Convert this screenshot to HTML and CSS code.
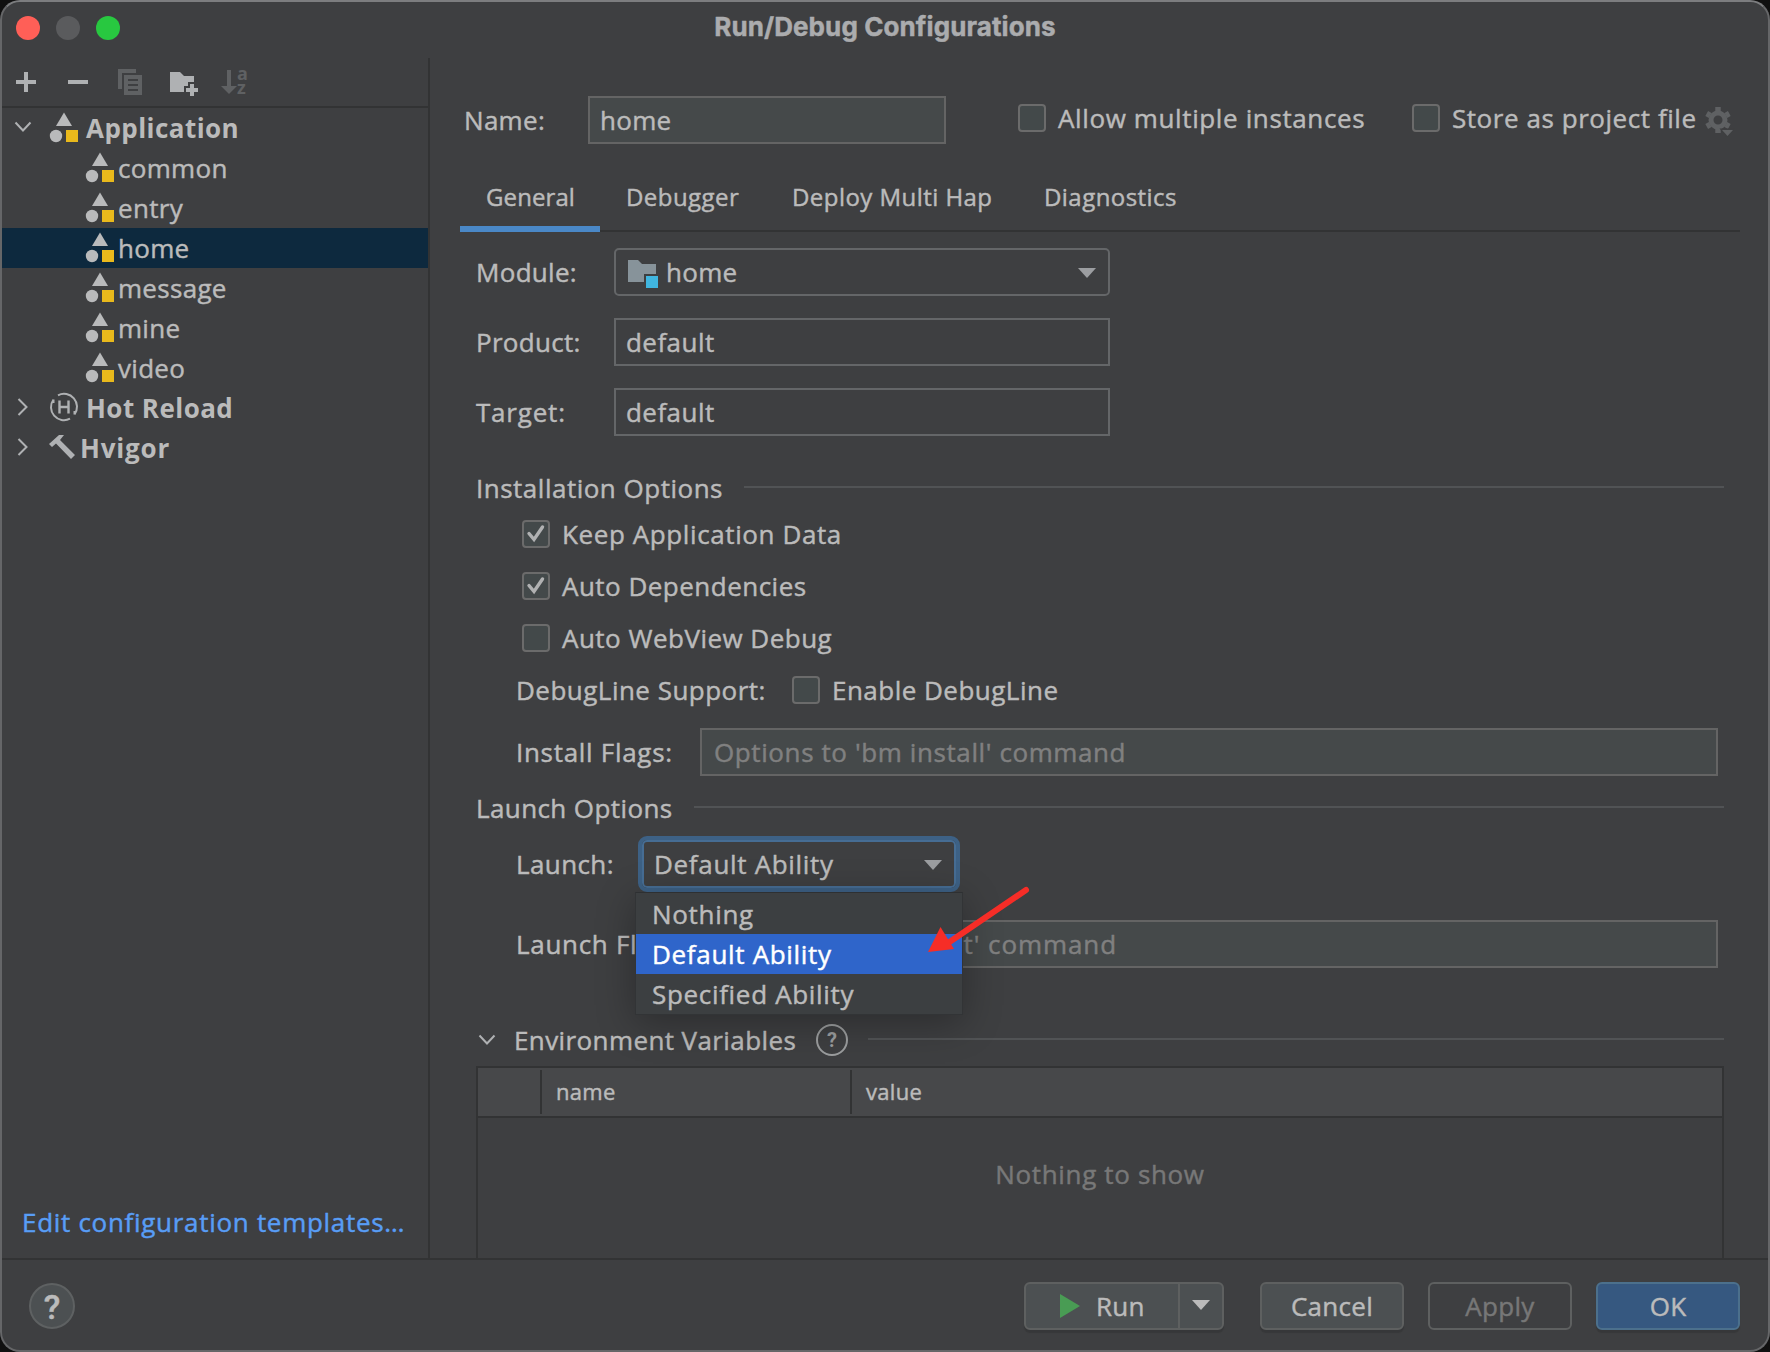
FILE: index.html
```html
<!DOCTYPE html>
<html lang="en">
<head>
    <meta charset="UTF-8">
    <meta name="viewport" content="width=device-width, initial-scale=1.0">
    <title>Run/Debug Configurations</title>
    <link rel="stylesheet" href="styles.css">
</head>
<body>
    <svg class="defs">
        <symbol id="app" viewBox="0 0 30 32">
            <path d="M15 1.500L23 15H7z" fill="#b9babb"/>
            <circle cx="7" cy="25" r="6.200" fill="#b9babb"/>
            <rect x="17" y="19" width="12" height="12" fill="#e9b91c"/>
        </symbol>
        <symbol id="down" viewBox="0 0 18 10">
            <path d="M0 0h18l-9 10z" fill="currentColor"/>
        </symbol>
        <symbol id="chevron" viewBox="0 0 18 12">
            <path d="M1.500 1.500L9 9.500l7.500-8" fill="none" stroke="#afb1b3" stroke-width="2"/>
        </symbol>
        <symbol id="chevron-right" viewBox="0 0 12 18">
            <path d="M1.500 1l8 8-8 8" fill="none" stroke="#afb1b3" stroke-width="2"/>
        </symbol>
    </svg>

    <div class="window">
        <div class="titlebar">
            <div class="lights">
                <span class="light red"></span>
                <span class="light gray"></span>
                <span class="light green"></span>
            </div>
            <div class="title">Run/Debug Configurations</div>
        </div>

        <div class="content">
            <div class="sidebar">
                <div class="toolbar">
                    <svg width="20" height="20"><path d="M8 0h4v8h8v4h-8v8H8v-8H0V8h8z" fill="#afb1b3"/></svg>
                    <svg width="20" height="20"><path d="M0 8h20v4H0z" fill="#afb1b3"/></svg>
                    <svg width="24" height="26">
                        <path d="M0 0h18v4H4v16H0zM6 6h18v20H6z" fill="#5f6163"/>
                        <path d="M10 11h10M10 16h10M10 21h10" stroke="#3e3f41" stroke-width="2"/>
                    </svg>
                    <svg width="28" height="26">
                        <path d="M0 1h10l4 4h10v6h-6v4h-4v6H0z" fill="#afb1b3"/>
                        <path d="M20 13h4v4h4v4h-4v4h-4v-4h-4v-4h4z" fill="#afb1b3"/>
                    </svg>
                    <svg class="sort" width="32" height="40">
                        <path d="M6 8h4v16h6l-8 8-8-8h6z" fill="#5f6163"/>
                        <text x="16" y="18">a</text>
                        <text x="16" y="32">z</text>
                    </svg>
                </div>
                <div class="tree">
                    <div class="node group"><svg class="arrow" width="18" height="12"><use href="#chevron"/></svg><svg width="30" height="32"><use href="#app"/></svg><span>Application</span></div>
                    <div class="node"><svg width="30" height="32"><use href="#app"/></svg><span>common</span></div>
                    <div class="node"><svg width="30" height="32"><use href="#app"/></svg><span>entry</span></div>
                    <div class="node selected"><svg width="30" height="32"><use href="#app"/></svg><span>home</span></div>
                    <div class="node"><svg width="30" height="32"><use href="#app"/></svg><span>message</span></div>
                    <div class="node"><svg width="30" height="32"><use href="#app"/></svg><span>mine</span></div>
                    <div class="node"><svg width="30" height="32"><use href="#app"/></svg><span>video</span></div>
                    <div class="node group">
                        <svg class="arrow" width="18" height="18"><use href="#chevron-right" width="12" height="18" x="3"/></svg>
                        <svg width="30" height="30" viewBox="0 0 30 30">
                            <path d="M9 3.300A13 13 0 0 1 25.500 22.500M21 26.700A13 13 0 0 1 4.500 7.500M4.500 7.500V11M25.500 22.500V19" fill="none" stroke="#afb1b3" stroke-width="2"/>
                            <path d="M10.500 8.500v13M19.500 8.500v13M10.500 15h9" fill="none" stroke="#afb1b3" stroke-width="2.400"/>
                        </svg>
                        <span>Hot Reload</span>
                    </div>
                    <div class="node group hvigor">
                        <svg class="arrow" width="18" height="18"><use href="#chevron-right" width="12" height="18" x="3"/></svg>
                        <svg width="26" height="26" viewBox="0 0 26 26">
                            <path d="M0 10L10 1h5l-4 5 15 15-4 4L7 9.500 3 13z" fill="#afb1b3"/>
                        </svg>
                        <span>Hvigor</span>
                    </div>
                </div>
                <a class="templates">Edit configuration templates…</a>
            </div>

            <div class="main">
                <div class="name-row">
                    <label class="name-label">Name:</label>
                    <div class="input name-input">home</div>
                    <span class="check"></span><span class="allow">Allow multiple instances</span>
                    <span class="check"></span><span class="store">Store as project file</span>
                    <svg class="gear" width="30" height="32" viewBox="0 0 30 32">
                        <circle cx="13" cy="14" r="7" fill="none" stroke="#5f6163" stroke-width="5"/>
                        <path d="M13 1v4M13 23v4M1.700 7.500l3.500 2M20.800 18.500l3.500 2M1.700 20.500l3.500-2M20.800 9.500l3.500-2" stroke="#5f6163" stroke-width="5.500"/>
                        <path d="M14.500 22.500h15l-7.500 9z" fill="#3e3f41"/>
                        <path d="M17 24h11l-5.500 6z" fill="#5f6163"/>
                    </svg>
                </div>

                <div class="tabs">
                    <div class="tab active">General</div>
                    <div class="tab debugger">Debugger</div>
                    <div class="tab deploy">Deploy Multi Hap</div>
                    <div class="tab diagnostics">Diagnostics</div>
                </div>

                <div class="form">
                    <label>Module:</label>
                    <div class="select">
                        <svg class="folder" width="30" height="28" viewBox="0 0 30 28">
                            <path d="M0 0h10l4 4h14v10H16v8H0z" fill="#87939a"/>
                            <path d="M18 16h12v12H18z" fill="#40b6e0"/>
                        </svg>
                        <span>home</span>
                        <svg class="caret" width="18" height="10"><use href="#down"/></svg>
                    </div>
                    <label>Product:</label>
                    <div class="input plain">default</div>
                    <label class="target">Target:</label>
                    <div class="input plain">default</div>
                </div>

                <div class="section install"><span>Installation Options</span></div>
                <div class="option keep"><span class="check on"><svg width="24" height="24"><path d="M5 11.500l5 6L18.500 5" /></svg></span><span>Keep Application Data</span></div>
                <div class="option"><span class="check on"><svg width="24" height="24"><path d="M5 11.500l5 6L18.500 5" /></svg></span><span>Auto Dependencies</span></div>
                <div class="option"><span class="check"></span><span>Auto WebView Debug</span></div>
                <div class="option line"><label>DebugLine Support:</label><span class="check"></span><span>Enable DebugLine</span></div>
                <div class="flags"><label>Install Flags:</label><div class="input hint">Options to 'bm install' command</div></div>

                <div class="section launch"><span>Launch Options</span></div>
                <div class="launch-row">
                    <label>Launch:</label>
                    <div class="select focused">
                        <span>Default Ability</span>
                        <svg class="caret" width="18" height="10"><use href="#down"/></svg>
                        <div class="popup">
                            <div class="item">Nothing</div>
                            <div class="item current">Default Ability</div>
                            <div class="item">Specified Ability</div>
                        </div>
                        <svg class="pointer" width="106" height="74" viewBox="0 0 106 74">
                            <path d="M100 6L22 59" stroke="#f62d27" stroke-width="6" stroke-linecap="round"/>
                            <path d="M2 68L14.500 43 28 65z" fill="#f62d27"/>
                        </svg>
                    </div>
                </div>
                <div class="flags"><label>Launch Flags:</label><div class="input hint start">Options to 'am start' command</div></div>

                <div class="section env">
                    <svg width="18" height="12"><use href="#chevron"/></svg>
                    <span class="env-label">Environment Variables</span>
                    <span class="env-help">?</span>
                </div>
                <div class="table">
                    <div class="thead">
                        <div class="th"></div>
                        <div class="th">name</div>
                        <div class="th">value</div>
                    </div>
                    <div class="empty">Nothing to show</div>
                </div>
            </div>
        </div>

        <div class="footer">
            <div class="help">?</div>
            <div class="btn run">
                <div class="run-main"><svg width="20" height="24"><path d="M0 0l20 12L0 24z" fill="#499c54"/></svg><span>Run</span></div>
                <div class="run-more"><svg width="18" height="10"><use href="#down"/></svg></div>
            </div>
            <div class="btn">Cancel</div>
            <div class="btn disabled">Apply</div>
            <div class="btn primary">OK</div>
        </div>
    </div>
</body>
</html>
```
FILE: styles.css
```css
* {
    box-sizing: border-box;
}

body {
    margin: 0;
    width: 1770px;
    height: 1352px;
    overflow: hidden;
    background-color: #101010;
    color: #bbbbbb;
    font-family: "Open Sans", "Noto Sans", sans-serif;
    font-size: 26px;
    line-height: 40px;
    letter-spacing: 0.3px;
    white-space: nowrap;
    -webkit-text-stroke: 0.45px currentColor;
}

svg {
    display: block;
    flex: none;
}

.defs {
    display: none;
}

.window {
    width: 1770px;
    height: 1352px;
    display: flex;
    flex-direction: column;
    overflow: hidden;
    background-color: #3e3f41;
    border: 2px solid #656668;
    border-top-color: #7c7d7f;
    border-radius: 20px;
}

/* title bar */
.titlebar {
    height: 56px;
    display: flex;
    align-items: center;
    padding: 0 14px 4px;
}

.lights {
    display: flex;
    gap: 16px;
    width: 150px;
}

.light {
    width: 24px;
    height: 24px;
    border-radius: 50%;
}

.red {
    background-color: #ff5f57;
}

.gray {
    background-color: #5a5b5d;
}

.green {
    background-color: #28c840;
}

.title {
    flex: 1;
    margin: 0 150px 2px 0;
    text-align: center;
    font-family: Inter, sans-serif;
    font-weight: 700;
    font-size: 26px;
    letter-spacing: 0.1px;
    color: #abacae;
}

.content {
    height: 1200px;
    display: flex;
}

/* left side */
.sidebar {
    width: 428px;
    display: flex;
    flex-direction: column;
    border-right: 2px solid #323334;
}

.toolbar {
    height: 50px;
    display: flex;
    align-items: center;
    padding: 0 14px;
    border-bottom: 2px solid #323334;
}

.toolbar svg {
    margin-right: 30px;
}

.toolbar svg:first-child {
    margin-right: 32px;
}

.toolbar svg:nth-child(3) {
    margin-right: 28px;
}

.toolbar svg:nth-child(4) {
    margin: 3px 23px 0 0;
}

.toolbar .sort {
    margin-right: 0;
}

.sort text {
    font-family: "Open Sans", sans-serif;
    font-weight: 700;
    font-size: 18px;
    fill: #5f6163;
    -webkit-text-stroke: 0;
}

.node {
    height: 40px;
    display: flex;
    align-items: center;
    padding-left: 83px;
}

.node svg {
    margin-top: -2px;
}

.node span {
    margin-left: 3px;
}

.selected {
    background-color: #0d293e;
}

.group {
    padding-left: 12px;
    font-weight: 700;
    letter-spacing: 0.45px;
    -webkit-text-stroke: 0;
}

.group .arrow {
    margin-right: 17px;
}

.group span {
    margin-left: 7px;
}

.hvigor {
    letter-spacing: 0.8px;
}

.hvigor span {
    margin-left: 5px;
}

.templates {
    margin: auto 0 16px 20px;
    letter-spacing: 0.7px;
    color: #589df6;
}

/* right side */
.main {
    flex: 1;
    overflow: hidden;
    padding: 38px 28px 0 30px;
}

.name-row {
    height: 48px;
    display: flex;
    align-items: center;
}

.name-label {
    width: 128px;
    padding-left: 4px;
}

.input {
    height: 48px;
    line-height: 44px;
    padding-left: 10px;
    border: 2px solid #646464;
    background-color: #45494a;
}

.name-input {
    width: 358px;
    margin-right: 72px;
}

.check {
    flex: none;
    width: 28px;
    height: 28px;
    margin-right: 12px;
    border: 2px solid #6b6b6b;
    border-radius: 4px;
    background-color: #43494a;
}

.check path {
    fill: none;
    stroke: #b0b1b2;
    stroke-width: 3.4;
    stroke-linecap: round;
}

.name-row .check,
.name-row .allow,
.name-row .store {
    margin-bottom: 4px;
}

.allow {
    width: 354px;
    letter-spacing: 0.62px;
}

.store {
    width: 253px;
    letter-spacing: 0.55px;
}

.gear {
    margin-top: 4px;
}

.tabs {
    height: 88px;
    display: flex;
    border-bottom: 2px solid #323334;
    font-size: 24px;
    letter-spacing: 0.45px;
}

.tab {
    height: 88px;
    padding-top: 33px;
    padding-left: 26px;
}

.active {
    width: 140px;
    border-bottom: 6px solid #4a88c7;
    letter-spacing: 0.1px;
}

.debugger {
    width: 166px;
}

.deploy {
    width: 252px;
}

.form {
    display: grid;
    grid-template-columns: 138px 496px;
    row-gap: 22px;
    align-items: center;
    padding: 16px 0 36px 16px;
}

.target {
    letter-spacing: 0.8px;
}

.select {
    height: 48px;
    display: flex;
    align-items: center;
    padding: 0 12px;
    border: 2px solid #646668;
    border-radius: 5px;
}

.select span {
    margin-left: 8px;
}

.folder {
    margin-top: 3px;
}

.caret {
    margin-left: auto;
    margin-top: 2px;
    color: #9c9ea1;
}

.plain {
    background-color: transparent;
    border-color: #646668;
    letter-spacing: 0.45px;
}

.section {
    height: 32px;
    display: flex;
    align-items: center;
    padding-left: 16px;
    margin-right: 16px;
    letter-spacing: 0.4px;
}

.section::after {
    content: "";
    flex: 1;
    height: 2px;
    margin: 0 0 2px 22px;
    background-color: #515355;
}

.install {
    margin-bottom: 4px;
    letter-spacing: 0.5px;
}

.install span {
    width: 246px;
}

.option {
    height: 52px;
    display: flex;
    align-items: center;
    padding-left: 62px;
    letter-spacing: 0.48px;
}

.keep {
    letter-spacing: 0.6px;
}

.line {
    padding-left: 56px;
}

.line label {
    width: 276px;
}

.flags {
    display: flex;
    align-items: center;
    margin: 12px 22px 16px 56px;
    letter-spacing: 0.7px;
}

.flags label {
    width: 184px;
}

.hint {
    flex: 1;
    padding-left: 12px;
    letter-spacing: 0.6px;
    color: #808080;
}

.start {
    letter-spacing: 0.92px;
}

.launch span {
    width: 196px;
}

.launch-row {
    display: flex;
    align-items: center;
    margin: 12px 0 28px 56px;
    letter-spacing: 0.4px;
}

.launch-row label {
    width: 122px;
}

.focused {
    position: relative;
    width: 322px;
    height: 56px;
    padding: 0 12px 0 9px;
    border: 4px solid #3d6185;
    border-radius: 9px;
    box-shadow: inset 0 0 0 2px #466d94;
    letter-spacing: 0.68px;
}

.focused span {
    margin-left: 3px;
}

.focused .caret {
    margin-right: 2px;
}

.popup {
    position: absolute;
    z-index: 1;
    left: -7px;
    top: 52px;
    width: 328px;
    padding-top: 1px;
    background-color: #3c3f41;
    border: 1px solid #323436;
    border-top: 1px solid #2e3032;
    box-shadow: 0 8px 36px rgba(0, 0, 0, 0.3);
}

.item {
    height: 40px;
    padding-left: 16px;
}

.current {
    background-color: #2f65ca;
    color: #ffffff;
}

.pointer {
    position: absolute;
    z-index: 2;
    left: 284px;
    top: 44px;
}

.env {
    margin-top: 56px;
    padding-left: 18px;
}

.env-label {
    width: 281px;
    margin-left: 18px;
}

.env-help {
    width: 32px;
    height: 32px;
    margin-left: 21px;
    border: 2px solid #9b9d9e;
    border-radius: 50%;
    text-align: center;
    font-family: Roboto, sans-serif;
    font-size: 20px;
    font-weight: 700;
    line-height: 29px;
    letter-spacing: 0;
    color: #9b9d9e;
    -webkit-text-stroke: 0;
}

.env::after {
    margin-left: 20px;
}

.table {
    height: 300px;
    margin: 10px 16px 0 16px;
    border: 2px solid #323334;
}

.thead {
    height: 50px;
    display: flex;
    padding: 2px 0;
    background-color: #47484a;
    border-bottom: 2px solid #323334;
    font-size: 22px;
    line-height: 42px;
}

.th {
    padding-left: 14px;
}

.th:nth-child(1) {
    width: 64px;
    border-right: 2px solid #323334;
}

.th:nth-child(2) {
    width: 310px;
    border-right: 2px solid #323334;
}

.empty {
    padding-top: 36px;
    text-align: center;
    letter-spacing: 0.65px;
    color: #787878;
}

/* bottom buttons */
.footer {
    height: 92px;
    display: flex;
    align-items: center;
    gap: 24px;
    padding: 2px 28px 0 27px;
    border-top: 2px solid #323334;
}

.help {
    width: 46px;
    height: 46px;
    margin-right: auto;
    border: 2px solid #5e6162;
    border-radius: 50%;
    background-color: #4c5052;
    text-align: center;
    font-family: Roboto, sans-serif;
    font-size: 34px;
    font-weight: 500;
    line-height: 44px;
    letter-spacing: 0;
}

.btn {
    width: 144px;
    height: 48px;
    line-height: 44px;
    text-align: center;
    border: 2px solid #5e6060;
    border-radius: 6px;
    background-color: #4c5052;
    box-shadow: 0 3px 1px rgba(0, 0, 0, 0.12);
}

.run {
    width: 200px;
    display: flex;
    margin-right: 12px;
}

.run-main {
    width: 154px;
    display: flex;
    align-items: center;
    padding-left: 34px;
    border-right: 2px solid #5e6060;
}

.run-main span {
    margin-left: 16px;
}

.run-more {
    flex: 1;
    padding: 16px 0 0 12px;
}

.disabled {
    background-color: transparent;
    box-shadow: none;
    color: #777777;
}

.primary {
    background-color: #365880;
    border-color: #4c708c;
}
```
